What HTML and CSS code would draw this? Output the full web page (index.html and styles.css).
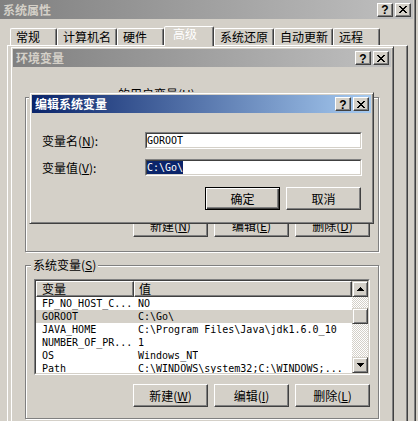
FILE: index.html
```html
<!DOCTYPE html>
<html lang="zh-CN">
<head>
<meta charset="utf-8">
<title>环境变量</title>
<link rel="stylesheet" href="styles.css">
</head>
<body>
<div class="win win-sys">
  <div class="titlebar inactive tb-sys">
    <span class="title">系统属性</span>
    <span class="tbtn help">?</span>
    <span class="tbtn"><svg width="8" height="7" viewBox="0 0 8 7" shape-rendering="crispEdges"><path d="M0 0h2v1H0zM6 0h2v1H6zM1 1h2v1H1zM5 1h2v1H5zM2 2h2v1H2zM4 2h2v1H4zM3 3h2v1H3zM2 4h2v1H2zM4 4h2v1H4zM1 5h2v1H1zM5 5h2v1H5zM0 6h2v1H0zM6 6h2v1H6z" fill="#000"/></svg></span>
  </div>
  <div class="sys-body">
    <div class="tabs">
      <div class="tab w47">常规</div>
      <div class="tab w60">计算机名</div>
      <div class="tab w47">硬件</div>
      <div class="tab sel">高级</div>
      <div class="tab w60">系统还原</div>
      <div class="tab w59">自动更新</div>
      <div class="tab w47">远程</div>
    </div>
    <div class="panel"></div>
  </div>
</div>

<div class="win win-env">
  <div class="titlebar inactive">
    <span class="title">环境变量</span>
    <span class="tbtn help">?</span>
    <span class="tbtn"><svg width="8" height="7" viewBox="0 0 8 7" shape-rendering="crispEdges"><path d="M0 0h2v1H0zM6 0h2v1H6zM1 1h2v1H1zM5 1h2v1H5zM2 2h2v1H2zM4 2h2v1H4zM3 3h2v1H3zM2 4h2v1H2zM4 4h2v1H4zM1 5h2v1H1zM5 5h2v1H5zM0 6h2v1H0zM6 6h2v1H6z" fill="#000"/></svg></span>
  </div>
  <div class="env-body">
    <div class="group g-user">
      <div class="glabel">的用户变量(<u>U</u>)</div>
      <div class="list list-user"><div class="list-in"></div></div>
      <div class="btnrow">
        <button class="btn">新建(<u>N</u>)</button>
        <button class="btn">编辑(<u>E</u>)</button>
        <button class="btn">删除(<u>D</u>)</button>
      </div>
    </div>
    <div class="group g-sys">
      <div class="glabel">系统变量(<u>S</u>)</div>
      <div class="list list-sys">
        <div class="list-in">
          <div class="lv-main">
            <div class="lv-head">
              <div class="hcell hc1">变量</div>
              <div class="hcell hc2">值</div>
            </div>
            <div class="lv-row"><span class="c1">FP_NO_HOST_C...</span><span class="c2">NO</span></div>
            <div class="lv-row hl"><span class="c1">GOROOT</span><span class="c2">C:\Go\</span></div>
            <div class="lv-row"><span class="c1">JAVA_HOME</span><span class="c2">C:\Program Files\Java\jdk1.6.0_10</span></div>
            <div class="lv-row"><span class="c1">NUMBER_OF_PR...</span><span class="c2">1</span></div>
            <div class="lv-row"><span class="c1">OS</span><span class="c2">Windows_NT</span></div>
            <div class="lv-row"><span class="c1">Path</span><span class="c2">C:\WINDOWS\system32;C:\WINDOWS;...</span></div>
          </div>
          <div class="sb">
            <div class="sbtn"><svg width="7" height="4" viewBox="0 0 7 4" shape-rendering="crispEdges"><path d="M3 0h1v1H3zM2 1h3v1H2zM1 2h5v1H1zM0 3h7v1H0z" fill="#000"/></svg></div>
            <div class="sb-track"><div class="sb-thumb"></div></div>
            <div class="sbtn"><svg width="7" height="4" viewBox="0 0 7 4" shape-rendering="crispEdges"><path d="M0 0h7v1H0zM1 1h5v1H1zM2 2h3v1H2zM3 3h1v1H3z" fill="#000"/></svg></div>
          </div>
        </div>
      </div>
      <div class="btnrow">
        <button class="btn">新建(<u>W</u>)</button>
        <button class="btn">编辑(<u>I</u>)</button>
        <button class="btn">删除(<u>L</u>)</button>
      </div>
    </div>
  </div>
</div>

<div class="win win-edit">
  <div class="titlebar active">
    <span class="title">编辑系统变量</span>
    <span class="tbtn help">?</span>
    <span class="tbtn"><svg width="8" height="7" viewBox="0 0 8 7" shape-rendering="crispEdges"><path d="M0 0h2v1H0zM6 0h2v1H6zM1 1h2v1H1zM5 1h2v1H5zM2 2h2v1H2zM4 2h2v1H4zM3 3h2v1H3zM2 4h2v1H2zM4 4h2v1H4zM1 5h2v1H1zM5 5h2v1H5zM0 6h2v1H0zM6 6h2v1H6z" fill="#000"/></svg></span>
  </div>
  <div class="edit-body">
    <div class="frow">
      <span class="flabel">变量名(<u>N</u>):</span>
      <div class="field"><div class="field-in">GOROOT</div></div>
    </div>
    <div class="frow">
      <span class="flabel">变量值(<u>V</u>):</span>
      <div class="field"><div class="field-in"><span class="sel">C:\Go\</span></div></div>
    </div>
    <div class="edit-btns">
      <button class="btn default">确定</button>
      <button class="btn">取消</button>
    </div>
  </div>
</div>
</body>
</html>
```

FILE: styles.css
```css
* { box-sizing: border-box; }
html, body { margin: 0; padding: 0; overflow: hidden; }
body {
  width: 418px;
  height: 421px;
  position: relative;
  background: #d4d0c8;
  font-family: "Noto Sans CJK SC", "Noto Sans", sans-serif;
  font-size: 12px;
  line-height: 12px;
  color: #000;
}
u { text-decoration: underline; }

/* windows */
.win {
  position: absolute;
  display: flex;
  flex-direction: column;
  background: #d4d0c8;
  border: 1px solid;
  border-color: #d4d0c8 #404040 #404040 #d4d0c8;
  box-shadow: inset 1px 1px #fff, inset -1px -1px #808080;
  padding: 2px;
}
.win-sys { left: -3px; top: -3px; width: 419px; height: 430px; }
.win-env { left: 10px; top: 46px; width: 384px; height: 380px; }
.win-edit { left: 29px; top: 92px; width: 345px; }

.titlebar {
  flex: none;
  height: 18px;
  margin-bottom: 1px;
  display: flex;
  align-items: center;
  padding: 0 2px;
}
.tb-sys { height: 19px; margin-bottom: 0; }
.inactive { background: linear-gradient(to right, #808080, #c0c0c0); color: #d4d0c8; }
.active { background: linear-gradient(to right, #0a246a, #a6caf0); color: #fff; }
.title { flex: 1; font-weight: 700; white-space: nowrap; padding-left: 1px; }

.tbtn {
  width: 16px;
  height: 14px;
  flex: none;
  display: flex;
  align-items: center;
  justify-content: center;
  background: #d4d0c8;
  border: 1px solid;
  border-color: #fff #404040 #404040 #fff;
  box-shadow: inset -1px -1px #808080;
  color: #000;
}
.tbtn + .tbtn { margin-left: 2px; }
.help { font: 700 12px/12px "Liberation Sans", sans-serif; padding-top: 1px; }

/* system properties */
.sys-body {
  flex: 1;
  display: flex;
  flex-direction: column;
  padding: 7px 5px 0 7px;
}
.tabs {
  display: flex;
  align-items: flex-end;
  height: 19px;
  padding-left: 3px;
  position: relative;
  z-index: 1;
}
.tab {
  height: 17px;
  padding: 2px 0 0 5px;
  border: 1px solid;
  border-bottom: 0;
  border-color: #fff #404040 transparent #fff;
  box-shadow: inset -1px 0 #808080;
  border-radius: 2px 2px 0 0;
  white-space: nowrap;
}
.w47 { width: 47px; }
.w59 { width: 59px; }
.w60 { width: 60px; }
.tab.sel {
  width: 50px;
  height: 20px;
  margin-bottom: -1px;
  padding: 1px 0 0 8px;
  background: #d4d0c8;
}
.panel {
  flex: 1;
  border: 1px solid;
  border-color: #fff #404040 #404040 #fff;
  box-shadow: inset -1px -1px #808080;
}

/* environment variables */
.env-body { flex: 1; padding: 0 12px; }
.group {
  border: 1px solid #808080;
  box-shadow: inset 1px 1px #fff, 1px 1px #fff;
  padding: 0 8px 14px;
}
.g-user { margin-top: 29px; }
.g-sys { margin-top: 13px; padding-bottom: 11px; }
.glabel {
  width: fit-content;
  background: #d4d0c8;
  padding: 0 2px;
  margin: -7px 0 0 -3px;
  white-space: nowrap;
}
.g-user .glabel { margin: -10px 0 0 82px; }

.list {
  margin-top: 8px;
  border: 1px solid;
  border-color: #808080 #fff #fff #808080;
}
.list-user { height: 97px; }
.list-sys { height: 96px; }
.list-in {
  height: 100%;
  display: flex;
  overflow: hidden;
  background: #fff;
  border: 1px solid;
  border-color: #404040 #d4d0c8 #d4d0c8 #404040;
}
.lv-main { flex: 1; min-width: 0; display: flex; flex-direction: column; overflow: hidden; }
.lv-head { display: flex; height: 16px; flex: none; }
.hcell {
  background: #d4d0c8;
  border: 1px solid;
  border-color: #fff #404040 #404040 #fff;
  box-shadow: inset -1px -1px #808080;
  padding: 1px 0 0 5px;
  line-height: 12px;
  white-space: nowrap;
}
.hc1 { width: 98px; flex: none; }
.hc2 { flex: 1; padding-left: 4px; }
.lv-row {
  display: flex;
  height: 13px;
  flex: none;
  font: 10px/13px "DejaVu Sans Mono", "Liberation Mono", monospace;
  white-space: pre;
}
.lv-row.hl { background: #d4d0c8; }
.c1 { width: 98px; flex: none; padding-left: 6px; overflow: hidden; }
.c2 { padding-left: 4px; overflow: hidden; }

.sb { width: 16px; flex: none; display: flex; flex-direction: column; }
.sbtn, .sb-thumb {
  height: 16px;
  flex: none;
  background: #d4d0c8;
  border: 1px solid;
  border-color: #d4d0c8 #404040 #404040 #d4d0c8;
  box-shadow: inset 1px 1px #fff, inset -1px -1px #808080;
  display: flex;
  align-items: center;
  justify-content: center;
}
.sb-track {
  flex: 1;
  background: repeating-conic-gradient(#d4d0c8 0 25%, #fff 0 50%) 0 0 / 2px 2px;
}
.sb-thumb { margin-top: 11px; }

.btnrow { display: flex; justify-content: flex-end; gap: 6px; margin-top: 9px; }
.btn {
  width: 75px;
  height: 23px;
  padding: 0;
  margin: 0;
  display: flex;
  align-items: center;
  justify-content: center;
  font-family: "Noto Sans CJK SC", "Noto Sans", sans-serif;
  font-size: 12px;
  line-height: 12px;
  color: #000;
  background: #d4d0c8;
  border: 1px solid;
  border-color: #fff #404040 #404040 #fff;
  box-shadow: inset -1px -1px #808080;
  white-space: nowrap;
}
.btn.default {
  border-color: #000;
  box-shadow: inset 1px 1px #fff, inset -1px -1px #404040, inset -2px -2px #808080;
}

/* edit system variable */
.edit-body { padding: 18px 9px 11px 10px; }
.frow { display: flex; align-items: center; height: 17px; }
.frow + .frow { margin-top: 10px; }
.flabel { width: 103px; flex: none; white-space: nowrap; }
.field {
  flex: 1;
  height: 17px;
  border: 1px solid;
  border-color: #808080 #fff #fff #808080;
}
.field-in {
  height: 100%;
  background: #fff;
  border: 1px solid;
  border-color: #404040 #d4d0c8 #d4d0c8 #404040;
  font: 10px/13px "DejaVu Sans Mono", "Liberation Mono", monospace;
  white-space: pre;
}
.sel { display: inline-block; height: 13px; background: #0a246a; color: #fff; }
.edit-btns {
  display: flex;
  justify-content: flex-end;
  gap: 6px;
  margin-top: 11px;
  padding-right: 1px;
}
```
